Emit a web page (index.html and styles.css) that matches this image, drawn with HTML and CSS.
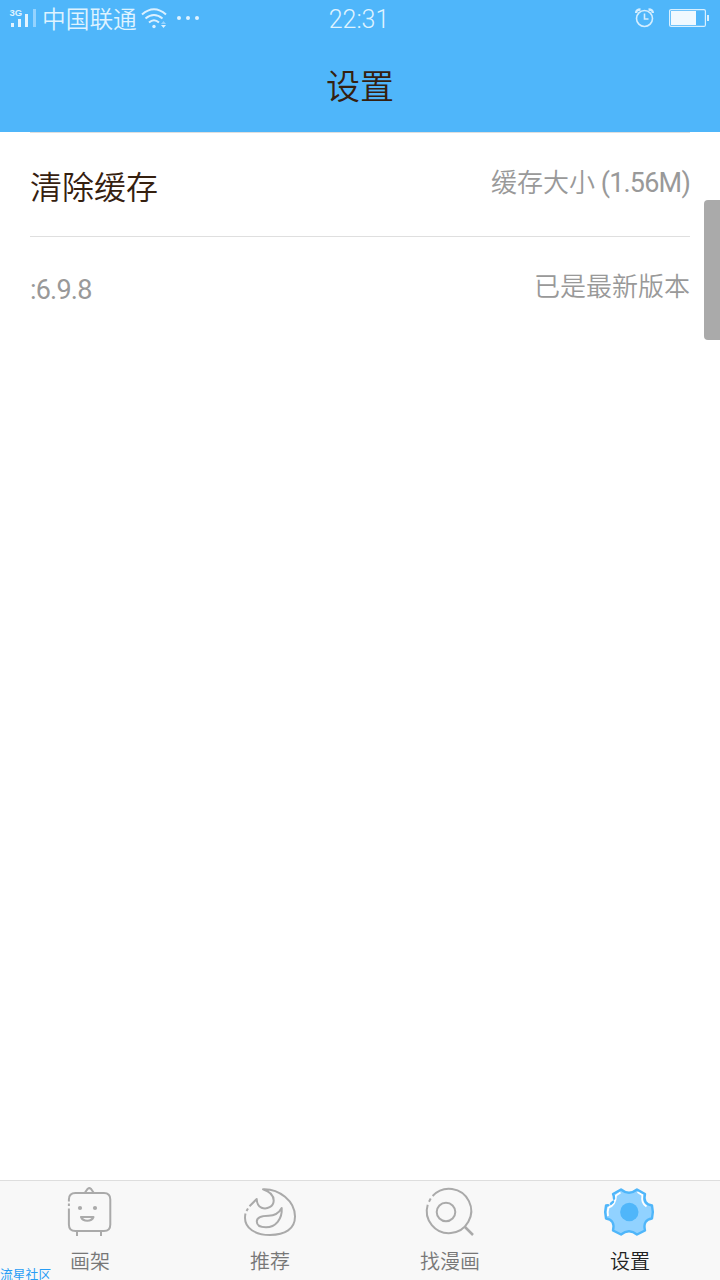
FILE: index.html
```html
<!DOCTYPE html>
<html lang="zh-CN">
<head>
    <meta charset="UTF-8">
    <meta name="viewport" content="width=device-width, initial-scale=1.0">
    <title>设置</title>
    <link rel="stylesheet" href="styles.css">
</head>
<body>
    <header class="top">
        <div class="status">
            <div class="status-left">
                <svg class="signal" width="28" height="24" viewBox="0 0 28 24">
                    <text x="-.5" y="10" class="net">3G</text>
                    <path d="M1 17h3v4h-3zM8 13h3v8h-3zM15 8h3v13h-3z" fill="#e3f4ff"/>
                    <path d="M23 3h3v18h-3z" fill="#94d3ff"/>
                </svg>
                <span class="carrier">中国联通</span>
                <svg class="wifi" width="28" height="24" viewBox="0 0 28 24" fill="none" stroke="#dcf1ff" stroke-width="2">
                    <path d="M1 8.500Q13 -2 25 8.500M4.500 12.500Q13 5.500 21.500 12.500M8 16.500Q13 12 18 16.500"/>
                    <circle cx="13" cy="20.500" r="1.700" fill="#dcf1ff" stroke="none"/>
                    <path d="M20 18l2.500-3 2.500 3z" fill="#94d3ff" stroke="none"/>
                    <path d="M20 19l2.500 3 2.500-3z" fill="#dcf1ff" stroke="none"/>
                </svg>
                <span class="dots"><i></i><i></i><i></i></span>
            </div>
            <div class="time">22:31</div>
            <div class="status-right">
                <svg width="20" height="22" viewBox="0 0 20 22" fill="none" stroke="#d4eeff" stroke-width="1.600">
                    <circle cx="9.500" cy="11.500" r="8"/>
                    <path d="M9.500 6.500v5.500h4"/>
                    <path d="M1.200 6Q1 2.500 5.500 2.500M13.500 2.500Q18 2.500 17.800 6" stroke-width="2.400"/>
                </svg>
                <svg width="41" height="20" viewBox="0 0 41 20">
                    <rect x=".6" y="1.600" width="35.800" height="16.800" rx="1.500" fill="none" stroke="#d8f0ff" stroke-width="1.200"/>
                    <rect x="2" y="3" width="25" height="14" fill="#f0f9ff"/>
                    <rect x="38" y="7" width="2" height="6" fill="#d8f0ff"/>
                </svg>
            </div>
        </div>
        <h1>设置</h1>
    </header>

    <main class="list">
        <div class="row">
            <span class="name">清除缓存</span>
            <span class="value">缓存大小 <span class="size">(1.56M)</span></span>
        </div>
        <div class="row">
            <span class="version">:6.9.8</span>
            <span class="value">已是最新版本</span>
        </div>
    </main>
    <div class="scrollbar"></div>

    <nav class="tabs">
        <div class="tab">
            <svg class="icon" viewBox="0 0 60 56">
                <path d="M8.900 20.500V18.500Q8.900 12 15.400 12H44Q50.300 12 50.300 18.500V43.500Q50.300 50 44 50H15.400Q8.900 50 8.900 43.500V27.500M8.900 22.500V25"/>
                <path d="M25 11.500L27.800 7.700Q29.300 6.500 30.800 7.700L33.500 11.500M17 50v5M41 50v5"/>
                <circle class="dot" cx="20" cy="27" r="2.100"/>
                <circle class="dot" cx="35" cy="27" r="2.100"/>
                <path d="M21 36H33.500Q32 39.700 27.300 39.700Q22.500 39.700 21 36z"/>
            </svg>
            <span>画架</span>
        </div>
        <div class="tab">
            <svg class="icon" viewBox="0 0 60 56">
                <path d="M9.500 25.300L16.700 18Q17 25 21.500 26.800C27 29 33.700 25.500 33.700 19.500C33.700 14.500 30 10.500 23 8.200C39 7.500 55 20 55 35.500C55 48 45 54 30 54C15 54 5 47 5 37Q5 34.500 5.500 32.500M6.500 30L8 27.500"/>
                <path d="M41.700 27C39 32 34.500 34.700 28.500 34.700C22 34.700 16.800 36.500 16.800 40.500C16.800 44.500 21 46.300 26 46.300C35.500 46.300 42.500 38 41.700 27z"/>
            </svg>
            <span>推荐</span>
        </div>
        <div class="tab">
            <svg class="icon" viewBox="0 0 60 56">
                <path d="M12.600 15A22.200 22.200 0 1 1 7.700 23.700M9 20.700L10.700 17.600"/>
                <circle cx="26" cy="31" r="9.300"/>
                <path d="M45 46l8 8" stroke-width="2.500"/>
            </svg>
            <span>找漫画</span>
        </div>
        <div class="tab active">
            <svg class="icon" viewBox="0 0 60 56">
                <path class="body" d="M21 8.500Q29 15 37 8.500L45 13Q42.500 23 52 24.500Q53.700 31 52 37.500Q42.500 39 45 49.500L37 53.500Q29 47 21 53.500L13 49.500Q15.500 39 6 37.500Q4.300 31 6 24.500Q15.500 23 13 13z"/>
                <path class="shine" d="M8 35Q7 31 8.500 26.500Q15.500 24.500 16 14.500L20.500 11.500M37.500 11L42.500 14.200Q41 22 46.500 25.500"/>
                <path class="gear" d="M14 17.500Q14 15 13 13L21 8.500Q29 15 37 8.500L45 13Q42.500 23 52 24.500Q53.700 31 52 37.500Q42.500 39 45 49.500L37 53.500Q29 47 21 53.500L13 49.500Q15.500 39 6 37.500Q4.300 31 6 24.500L8 24.200M11 22.700L13 20.800"/>
                <circle class="core" cx="29.300" cy="31" r="9.200"/>
            </svg>
            <span>设置</span>
        </div>
    </nav>
    <div class="watermark">流星社区</div>
</body>
</html>
```

FILE: styles.css
```css
* {
    box-sizing: border-box;
}
body {
    margin: 0;
    height: 1280px;
    display: flex;
    flex-direction: column;
    background: #fff;
    font-family: "Noto Sans CJK SC", sans-serif;
    font-weight: 350;
    overflow: hidden;
}
.top {
    height: 132px;
    background: #4fb6fa;
}
.status {
    height: 36px;
    padding: 0 10px 0 10px;
    display: grid;
    grid-template-columns: 1fr 60px 1fr;
    align-items: center;
    color: #dff3ff;
}
.status-left, .status-right {
    display: flex;
    align-items: center;
}
.status-right {
    justify-content: flex-end;
    gap: 14px;
}
.net {
    font: bold 9.5px "Liberation Sans", sans-serif;
    fill: #dff3ff;
}
.signal {
    margin: -1px 4px 0 0;
    overflow: visible;
}
.carrier {
    font-size: 23.7px;
    line-height: 34px;
}
.wifi {
    margin: 0 8px 0 4px;
}
.dots {
    display: flex;
    gap: 5px;
}
.dots i {
    width: 4px;
    height: 4px;
    border-radius: 50%;
    background: #dff3ff;
}
.time {
    margin: 3px 0 0 -2px;
    font-family: Roboto, sans-serif;
    font-size: 25px;
    text-align: center;
}
h1 {
    margin: 24px 0 0;
    font-size: 34px;
    line-height: 50px;
    font-weight: 350;
    text-align: center;
    color: #35200f;
}
.list {
    flex: 1;
    padding: 0 30px;
}
.row {
    height: 104px;
    padding-top: 28px;
    border-top: 1px solid #dfdfdf;
    display: flex;
    justify-content: space-between;
    align-items: flex-start;
}
.name {
    font-size: 32px;
    line-height: 48px;
    font-weight: 350;
    color: #35200f;
}
.value {
    font-size: 26px;
    line-height: 40px;
    color: #999;
}
.size, .version {
    font-family: Roboto, sans-serif;
    font-size: 27px;
    font-weight: 400;
    letter-spacing: -0.8px;
    color: #999;
}
.version {
    line-height: 51px;
}
.scrollbar {
    position: absolute;
    right: 0;
    top: 200px;
    width: 16px;
    height: 140px;
    border-radius: 4px 0 0 4px;
    background: #aaa;
}
.tabs {
    height: 100px;
    display: grid;
    grid-template-columns: repeat(4, 1fr);
    background: #f8f8f8;
    border-top: 1px solid #dedede;
}
.tab {
    display: flex;
    flex-direction: column;
    align-items: center;
    font-size: 20px;
    line-height: 30px;
    color: #777;
}
.tab span {
    margin-top: 9px;
}
.tab.active {
    color: #222;
}
.icon {
    width: 60px;
    height: 56px;
    fill: none;
    stroke: #aaa;
    stroke-width: 2;
    stroke-linejoin: round;
}
.icon .dot {
    fill: #aaa;
    stroke: none;
}
.icon .body {
    fill: #91d2ff;
    stroke: none;
}
.icon .gear {
    stroke: #4fb6fa;
    stroke-width: 2.4;
    stroke-linecap: round;
}
.icon .shine {
    stroke: #fff;
    stroke-width: 2;
}
.icon .core {
    fill: #4fb6fa;
    stroke: none;
}
.watermark {
    position: absolute;
    left: 0;
    bottom: 0;
    font-size: 12.8px;
    line-height: 13px;
    font-weight: 400;
    color: #289df5;
}
```
